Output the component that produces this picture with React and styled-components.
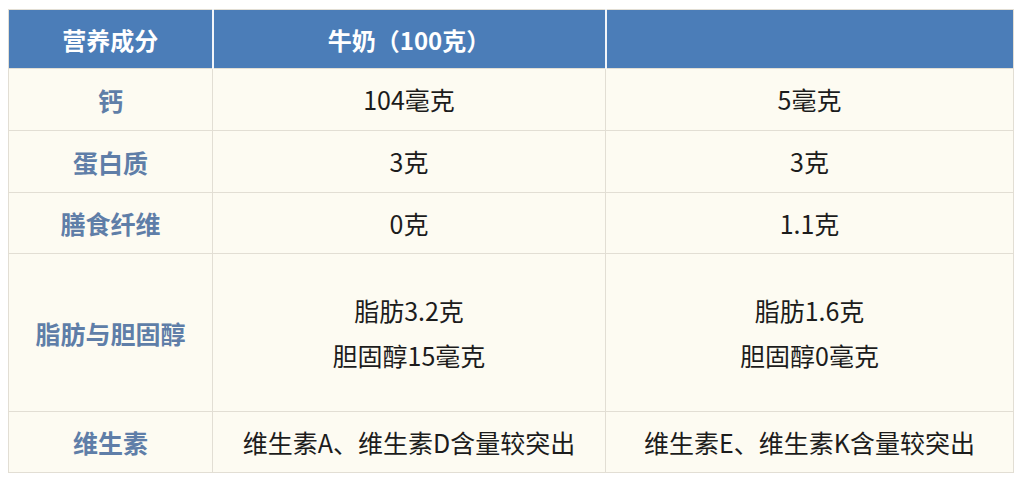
import React from "react";
import styled, { createGlobalStyle } from "styled-components";

const Global = createGlobalStyle`
  html, body { margin: 0; padding: 0; background: #ffffff; }
  body { font-family: "Noto Sans CJK SC", "Noto Sans", sans-serif; }
`;

const Page = styled.div`
  padding: 9px 0 0 8px;
`;

const Table = styled.table`
  width: 1005px;
  border-collapse: collapse;
  table-layout: fixed;
  background: #fdfbf2;
  border: 1px solid #e2ded4;
`;

const HeadRow = styled.tr`
  height: 59px;
  background: #4b7db8;
`;

const HeadCell = styled.th`
  color: #ffffff;
  font-size: 24px;
  font-weight: 700;
  text-align: center;
  padding: 0;
  border-left: 2px solid #f2f5f9;
  &:first-child { border-left: none; }
`;

const Row = styled.tr`
  height: ${(p) => p.$h}px;
`;

const LabelCell = styled.td`
  color: #5f7ea8;
  font-size: 25px;
  font-weight: 700;
  text-align: center;
  padding: 0;
  border: 1px solid #e2ded4;
`;

const Cell = styled.td`
  color: #1c1c1c;
  font-size: 25px;
  text-align: center;
  padding: 0;
  line-height: 45px;
  border: 1px solid #e2ded4;
`;

const Line = styled.div``;

const rows = [
  { label: "钙", a: ["104毫克"], b: ["5毫克"], h: 62 },
  { label: "蛋白质", a: ["3克"], b: ["3克"], h: 62 },
  { label: "膳食纤维", a: ["0克"], b: ["1.1克"], h: 61 },
  { label: "脂肪与胆固醇", a: ["脂肪3.2克", "胆固醇15毫克"], b: ["脂肪1.6克", "胆固醇0毫克"], h: 158 },
  { label: "维生素", a: ["维生素A、维生素D含量较突出"], b: ["维生素E、维生素K含量较突出"], h: 61 },
];

export default function App() {
  return (
    <Page>
      <Global />
      <Table>
        <colgroup>
          <col style={{ width: 204 }} />
          <col style={{ width: 393 }} />
          <col style={{ width: 408 }} />
        </colgroup>
        <thead>
          <HeadRow>
            <HeadCell>营养成分</HeadCell>
            <HeadCell>牛奶（100克）</HeadCell>
            <HeadCell></HeadCell>
          </HeadRow>
        </thead>
        <tbody>
          {rows.map((r) => (
            <Row key={r.label} $h={r.h}>
              <LabelCell>{r.label}</LabelCell>
              <Cell>
                {r.a.map((t) => (
                  <Line key={t}>{t}</Line>
                ))}
              </Cell>
              <Cell>
                {r.b.map((t) => (
                  <Line key={t}>{t}</Line>
                ))}
              </Cell>
            </Row>
          ))}
        </tbody>
      </Table>
    </Page>
  );
}
